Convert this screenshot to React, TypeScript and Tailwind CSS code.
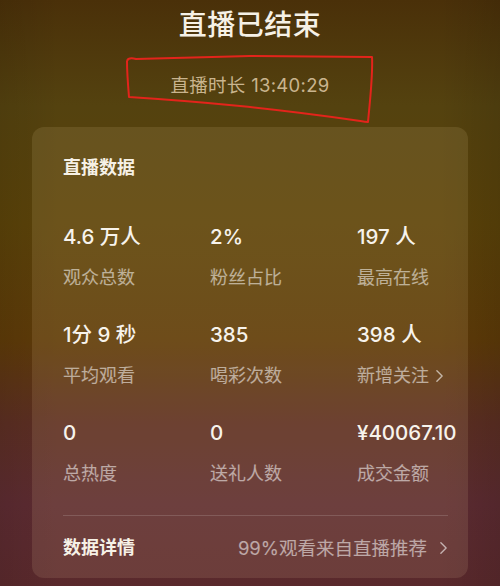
import React from "react";

const font = { fontFamily: '"Inter", "Noto Sans CJK SC", sans-serif' };

function Chevron({ className = "" }: { className?: string }) {
  return (
    <svg viewBox="0 0 10 16" className={className} fill="none" stroke="currentColor" strokeWidth="1.6" strokeLinecap="round" strokeLinejoin="round">
      <path d="M2 2 L8 8 L2 14" />
    </svg>
  );
}

const stats: { value: string; label: string; chevron?: boolean }[] = [
  { value: "4.6 万人", label: "观众总数" },
  { value: "2%", label: "粉丝占比" },
  { value: "197 人", label: "最高在线" },
  { value: "1分 9 秒", label: "平均观看" },
  { value: "385", label: "喝彩次数" },
  { value: "398 人", label: "新增关注", chevron: true },
  { value: "0", label: "总热度" },
  { value: "0", label: "送礼人数" },
  { value: "¥40067.10", label: "成交金额" },
];

export default function App() {
  return (
    <div
      className="relative w-[500px] h-[586px] overflow-hidden bg-[linear-gradient(180deg,#4a3009_0%,#54420f_18%,#5a4209_38%,#5d3a08_58%,#5b2e22_72%,#5c2b31_86%,#5a292c_100%)]"
      style={font}
    >
      <div className="absolute inset-0 bg-[linear-gradient(90deg,rgba(0,0,0,0.08)_0%,rgba(0,0,0,0)_12%,rgba(0,0,0,0)_88%,rgba(0,0,0,0.1)_100%)]" />
      <div className="relative flex flex-col items-center pt-[7px]">
        <div className="text-[28px] leading-[36px] font-medium text-[#f6f1e6] tracking-[0.5px]">直播已结束</div>
        <div className="mt-[30px] text-[18.5px] leading-[24px] text-[#c9b48e] tracking-[0.3px]">直播时长 13:40:29</div>
      </div>

      <svg className="absolute left-0 top-0 pointer-events-none" width="500" height="140" viewBox="0 0 500 140" fill="none">
        <path
          d="M127 61 C 128 58, 132 58, 136 59 L 250 56 L 372 57 C 373 75, 370 100, 368 122 C 340 118, 300 112, 240 106 C 200 102, 160 99, 129 97 C 128 85, 127 72, 127 61"
          stroke="#e3241b"
          strokeWidth="2"
          strokeLinejoin="round"
        />
      </svg>

      <div className="relative mx-[32px] mt-[30px] rounded-[12px] bg-[rgba(255,228,170,0.11)] pl-[31px] pr-[20px] pt-[29px] pb-[18px]">
        <div className="text-[18px] leading-[24px] font-semibold text-[#f6f1e6]">直播数据</div>
        <div className="mt-[43px] grid grid-cols-[147px_147px_1fr] gap-y-[31px]">
          {stats.map((s, i) => (
            <div key={i} className="flex flex-col">
              <div className="text-[20.5px] leading-[28px] font-medium text-[#f7f3ec] whitespace-nowrap">{s.value}</div>
              <div className="mt-[15px] flex items-center text-[18px] leading-[24px] text-white/55">
                <span>{s.label}</span>
                {s.chevron && <Chevron className="ml-[6px] w-[9px] h-[14px] text-white/60" />}
              </div>
            </div>
          ))}
        </div>
        <div className="mt-[29px] h-px bg-white/15" />
        <div className="mt-[20px] flex items-center justify-between">
          <div className="text-[18px] leading-[24px] font-semibold text-[#f6f1e6]">数据详情</div>
          <div className="flex items-center text-[18.5px] leading-[24px] text-white/55">
            <span>99%观看来自直播推荐</span>
            <Chevron className="ml-[12px] w-[9px] h-[14px] text-white/60" />
          </div>
        </div>
      </div>
    </div>
  );
}
